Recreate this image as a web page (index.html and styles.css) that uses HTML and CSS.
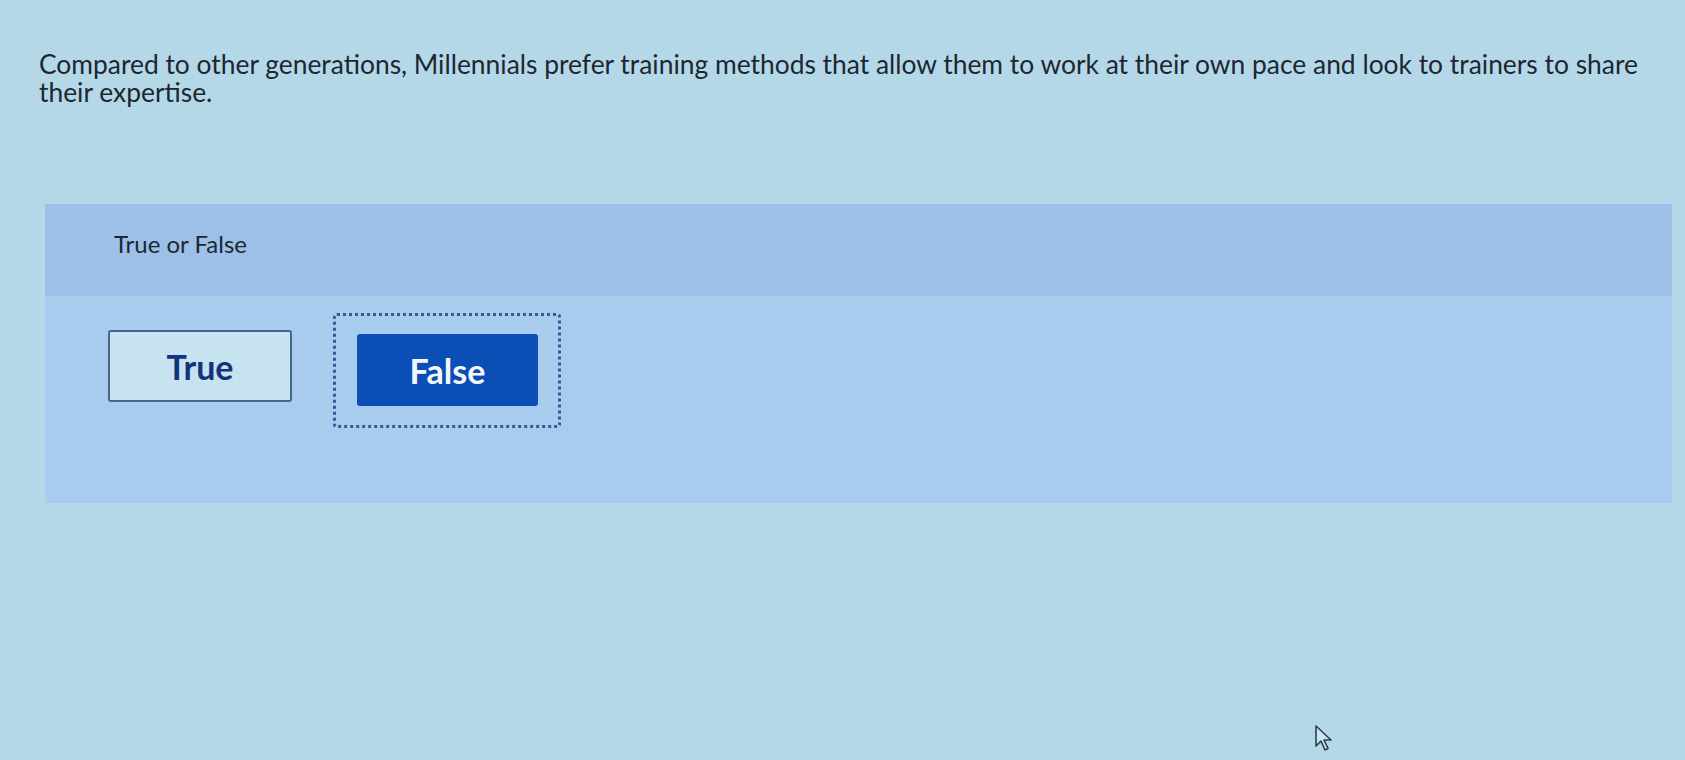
FILE: index.html
```html
<!DOCTYPE html>
<html>
<head>
  <title>Question</title>
  <link rel="stylesheet" href="styles.css">
</head>
<body>
  <div class="question">
    <p class="prompt">Compared to other generations, Millennials prefer training methods that allow them to work at their own pace and look to trainers to share their expertise.</p>

    <div class="answer-panel">
      <div class="answer-head">True or False</div>
      <div class="answer-body">
        <button class="choice">True</button>
        <div class="focus-ring">
          <button class="choice selected">False</button>
        </div>
      </div>
    </div>
  </div>

  <svg class="cursor" width="20" height="28" viewBox="0 0 20 28">
    <path d="M2 2 L2 22 L7 17 L11 26 L14 24.5 L10 16 L17 16 Z" fill="#c9e6f1" stroke="#2b3e52" stroke-width="1.6" stroke-linejoin="round"/>
  </svg>
</body>
</html>
```

FILE: styles.css
```css
body {
  margin: 0;
  font-family: Lato, "Open Sans", sans-serif;
  background: #b5d8e9;
  color: #1d2731;
  height: 760px;
  overflow: hidden;
}
.question {
  padding: 50px 6px 0 39px;
}
.prompt {
  margin: 0;
  font-size: 26.4px;
  line-height: 28px;
  max-width: 1620px;
}
.answer-panel {
  margin: 98px 7px 0 6px;
  background: #a8cced;
}
.answer-head {
  background: #9dc0e8;
  height: 92px;
  padding: 0 0 14px 69px;
  box-sizing: border-box;
  display: flex;
  align-items: center;
  font-size: 24px;
}
.answer-body {
  display: flex;
  align-items: flex-start;
  gap: 41px;
  padding: 17px 0 75px 63px;
}
.choice {
  width: 184px;
  height: 72px;
  font-family: inherit;
  font-size: 34px;
  font-weight: bold;
  border-radius: 3px;
  cursor: pointer;
}
.choice:not(.selected) {
  margin-top: 17px;
  background: #c8e3f0;
  border: 2px solid #45668a;
  color: #13337c;
}
.choice.selected {
  width: 181px;
  background: #0b4eb6;
  border: none;
  color: #f4f8fc;
}
.focus-ring {
  padding: 18px 20px 19px 21px;
  border: 3px dotted #2f5c98;
  border-radius: 4px;
}
.cursor {
  position: absolute;
  left: 1314px;
  top: 724px;
}
```
